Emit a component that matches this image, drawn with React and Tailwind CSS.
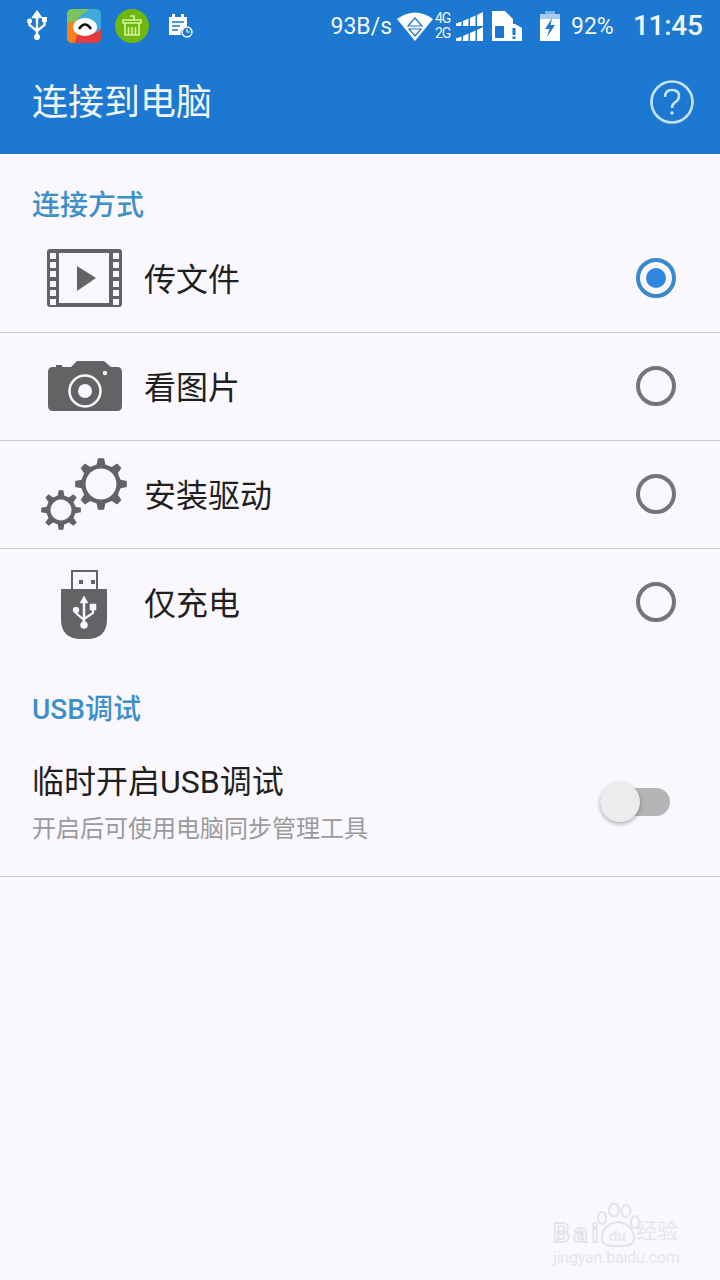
const gearPath = (cx, cy, outer, root, teeth) => {
  const pts = []
  const step = (Math.PI * 2) / teeth
  for (let i = 0; i < teeth; i++) {
    const a = i * step - Math.PI / 2
    const w = step * 0.15
    const v = step * 0.28
    pts.push([a - v, root], [a - w, outer], [a + w, outer], [a + v, root])
  }
  return (
    pts
      .map(([a, r], i) => `${i ? "L" : "M"}${(cx + Math.cos(a) * r).toFixed(2)} ${(cy + Math.sin(a) * r).toFixed(2)}`)
      .join(" ") + " Z"
  )
}

const FilmIcon = () => {
  const ys = [30, 39, 48, 58, 67, 76]
  return (
    <svg width="112" height="108" fill="#636265">
      <rect x="15" y="24" width="75" height="58" rx="3" />
      <rect x="27" y="28" width="50" height="50" fill="#faf8fc" />
      {ys.map((y) => (
        <g key={y} fill="#faf8fc">
          <rect x="18" y={y - 2} width="6" height="6" />
          <rect x="81" y={y - 2} width="6" height="6" />
        </g>
      ))}
      <path d="M45 41 L64 53 L45 66 Z" />
    </svg>
  )
}

const CameraIcon = () => (
  <svg width="112" height="108" fill="#636265">
    <path d="M21 34 H24 V32 H30 V34 H39 L45 28 H72 L79 34 H85 Q90 34 90 39 V73 Q90 78 85 78 H21 Q16 78 16 73 V39 Q16 34 21 34 Z" />
    <circle cx="53" cy="58" r="15.5" fill="none" stroke="#faf8fc" strokeWidth="2.5" />
    <circle cx="53" cy="58" r="7" fill="#faf8fc" />
    <circle cx="73" cy="40" r="2.2" fill="#faf8fc" />
  </svg>
)

const GearsIcon = () => (
  <svg width="112" height="108" fill="#636265">
    <path fillRule="evenodd" d={`${gearPath(69, 43, 26, 20, 8)} M69 27.5 a15.5 15.5 0 1 0 0.01 0 Z`} />
    <path fillRule="evenodd" d={`${gearPath(29, 69, 20, 14.8, 8)} M29 58.5 a10.5 10.5 0 1 0 0.01 0 Z`} />
  </svg>
)

const UsbStickIcon = () => (
  <svg width="112" height="108" fill="#636265">
    <rect x="40" y="22" width="25" height="19" fill="none" stroke="#636265" strokeWidth="2" />
    <rect x="47" y="31" width="4" height="4" />
    <rect x="59" y="31" width="4" height="4" />
    <path d="M29 40 H75 V70 Q75 90 55 90 H49 Q29 90 29 70 Z" />
    <g fill="#faf8fc" stroke="#faf8fc">
      <path d="M52 47 L56 54 H48 Z" strokeWidth="0.5" />
      <path d="M52 52 V76" strokeWidth="2.5" fill="none" />
      <path d="M44 62 V64 L52 71 M61 60 V64 L52 70" strokeWidth="2.2" fill="none" />
      <circle cx="52" cy="76" r="3.5" strokeWidth="0.5" />
      <circle cx="44" cy="61" r="3" strokeWidth="0.5" />
      <rect x="58" y="55" width="6" height="6" strokeWidth="0.5" />
    </g>
  </svg>
)

const SignalBars = () => (
  <svg width="28" height="14" viewBox="0 0 28 14" fill="#fff">
    <path d="M0 14 V11.5 L5.5 9.5 V14 Z M7 14 V9 L12.5 6.5 V14 Z M14 14 V6 L19.5 3.5 V14 Z M21 14 V3 L27 0 V14 Z" />
  </svg>
)

const StatusLeft = () => (
  <div className="flex items-center">
    <svg className="ml-[27px]" width="20" height="32" viewBox="0 0 20 32" fill="none" stroke="#fff" strokeWidth="2.4">
      <path d="M10 2 L13.5 7 H6.5 Z" fill="#fff" />
      <path d="M10 6 V26 M2.5 12 V15 L10 21 M17.5 11 V15 L10 21" />
      <circle cx="10" cy="27" r="3" fill="#fff" stroke="none" />
      <circle cx="2.5" cy="11" r="2.5" fill="#fff" stroke="none" />
      <rect x="15" y="7" width="5" height="5" fill="#fff" stroke="none" />
    </svg>
    <svg className="ml-[20px]" width="34" height="34" viewBox="0 0 34 34">
      <defs>
        <clipPath id="appclip">
          <rect width="34" height="34" rx="5" />
        </clipPath>
      </defs>
      <g clipPath="url(#appclip)">
        <rect width="34" height="34" fill="#3fa9e0" />
        <path d="M0 0 H24 Q14 4 8 14 L0 20 Z" fill="#7cc35b" />
        <path d="M0 14 L8 12 Q10 24 24 28 L14 34 H0 Z" fill="#f5821f" />
        <path d="M10 26 Q24 28 34 20 V34 H8 Z" fill="#e53b3a" />
        <ellipse cx="18" cy="18" rx="12" ry="9" fill="#fff" />
        <path d="M12 20 Q18 11 24 20" fill="none" stroke="#111" strokeWidth="2.6" />
      </g>
    </svg>
    <svg className="ml-[14px]" width="34" height="34" viewBox="0 0 34 34" fill="none" stroke="#d8f5a0" strokeWidth="1.6">
      <circle cx="17" cy="17" r="17" fill="#6fb80f" stroke="none" />
      <path d="M15 7 H19 V11 M8 11 H26 V14 H8 Z M10 14 V26 H24 V14 M13.5 18 V26 M17 18 V26 M20.5 18 V26" />
    </svg>
    <svg className="ml-[20px]" width="24" height="24" viewBox="0 0 24 24" fill="#fff">
      <path d="M0 3 H3 V0 H6 V3 H12 V0 H15 V3 H18 V13 A6 6 0 0 0 12 21 H0 Z" />
      <path d="M3 8 H15 M3 12 H11 M3 16 H9" stroke="#1c78d0" strokeWidth="1.5" />
      <circle cx="18" cy="18" r="5" fill="none" stroke="#fff" strokeWidth="1.4" />
      <path d="M18 15 V18 H21" fill="none" stroke="#fff" strokeWidth="1.2" />
    </svg>
  </div>
)

const StatusRight = () => (
  <div className="flex items-center text-[#f2f7fc]">
    <span className="text-[23px] leading-none">93B/s</span>
    <svg className="ml-[5px]" width="36" height="29" viewBox="0 0 36 29" fill="#fff">
      <path d="M0 7 Q18 -6 36 7 L18 29 Z" />
      <path d="M18 6 L25 14 H11 Z M12 17 H24 L18 24 Z" fill="none" stroke="#1c78d0" strokeWidth="1.2" />
    </svg>
    <div className="ml-[2px] flex w-[16px] flex-col text-[14px] font-normal leading-[15px] tracking-[-1px]">
      <span>4G</span>
      <span>2G</span>
    </div>
    <div className="ml-[5px] flex flex-col gap-[1px]">
      <SignalBars />
      <SignalBars />
    </div>
    <svg className="ml-[8px]" width="30" height="30" viewBox="0 0 30 30" fill="#fff">
      <path d="M0 0 H13 L21 8 V13 H15 V30 H0 Z" />
      <rect x="3" y="15" width="9" height="12" fill="#1c78d0" />
      <path d="M13 13 H23 L30 17 V30 H13 Z" />
      <path d="M20.5 17 H23.5 V24 H20.5 Z M20.5 25.5 H23.5 V28 H20.5 Z" fill="#1c78d0" />
    </svg>
    <svg className="ml-[18px]" width="20" height="30" viewBox="0 0 20 30" fill="#fff">
      <rect x="5" y="0" width="10" height="3" fill="#7fb2e4" />
      <rect x="0" y="3" width="20" height="6" fill="#a9cbed" />
      <rect x="0" y="8" width="20" height="22" />
      <path d="M12 7 L5 18 H9.5 L7 26 L15 14 H10.5 Z" fill="#1c78d0" />
    </svg>
    <span className="ml-[11px] w-[43px] text-[23px] leading-none">92%</span>
    <span className="ml-[19px] w-[71px] text-[28px] font-medium leading-none tracking-[-0.3px]">11:45</span>
  </div>
)

const options = [
  { label: "传文件", Icon: FilmIcon, selected: true },
  { label: "看图片", Icon: CameraIcon },
  { label: "安装驱动", Icon: GearsIcon },
  { label: "仅充电", Icon: UsbStickIcon, last: true },
]

const Radio = ({ selected }) =>
  selected ? (
    <div className="mb-[2px] flex h-10 w-10 items-center justify-center rounded-full border-4 border-[#3a88cd]">
      <div className="h-5 w-5 rounded-full bg-[#2f86de]" />
    </div>
  ) : (
    <div className="mb-[2px] h-10 w-10 rounded-full border-4 border-[#757577]" />
  )

const Watermark = () => (
  <div className="absolute left-[552px] top-[1200px] h-[72px] w-[140px] whitespace-nowrap text-[#e6e6ea]">
    <svg className="absolute left-[42px] top-[2px]" width="48" height="46" viewBox="0 0 48 46" fill="none" stroke="#e4e4e8" strokeWidth="2">
      <ellipse cx="8" cy="16" rx="4" ry="6" />
      <ellipse cx="20" cy="8" rx="5" ry="6.5" />
      <ellipse cx="32" cy="9" rx="4.5" ry="6" />
      <ellipse cx="41" cy="20" rx="4" ry="6" />
      <path d="M8 37 Q8 22 24 20 Q40 22 40 37 Q40 45 24 44 Q8 45 8 37 Z" />
    </svg>
    <span className="absolute left-[1px] top-[20px] text-[26px] font-bold leading-none tracking-[4px] text-transparent [-webkit-text-stroke:1.5px_#e2e2e6]">Bai</span>
    <span className="absolute left-[57px] top-[29px] text-[15px] font-bold leading-none">du</span>
    <span className="absolute left-[84px] top-[21px] text-[21px] leading-none">经验</span>
    <span className="absolute left-[1px] top-[50px] text-[16px] leading-none tracking-[-0.2px]">jingyan.baidu.com</span>
  </div>
)

export default function App() {
  return (
    <div className="relative flex h-[1280px] w-[720px] flex-col overflow-hidden bg-[#faf8fc] font-['Roboto','Noto_Sans_CJK_SC',sans-serif]">
      <header className="h-[154px] bg-[#1c78d0]">
        <div className="flex h-[52px] items-center justify-between pr-[16px]">
          <StatusLeft />
          <StatusRight />
        </div>
        <div className="flex h-[100px] items-center justify-between pl-[32px] pr-[26px]">
          <h1 className="mt-[2px] text-[36px] leading-none text-[#f0f6fc]">连接到电脑</h1>
          <svg width="44" height="44" viewBox="0 0 44 44" fill="none" stroke="#c5e4fa" strokeWidth="2.6">
            <circle cx="22" cy="22" r="20.5" />
            <path d="M15 17 Q15 10 22 10 Q29 10 29 16 Q29 20 25 22.5 Q22 24.5 22 28" />
            <circle cx="22" cy="33" r="1.8" fill="#c5e4fa" stroke="none" />
          </svg>
        </div>
      </header>

      <h2 className="flex h-[71px] items-end pl-[32px] text-[28px] font-medium leading-[38px] text-[#3d8fc9]">连接方式</h2>

      {options.map(({ label, Icon, selected, last }) => (
        <div
          key={label}
          className={`flex h-[108px] items-center pl-[32px] pr-[44px] ${last ? "" : "border-b border-[#c9c8cb]"}`}
        >
          <Icon />
          <span className="mt-[2px] flex-1 text-[32px] leading-none text-[#1f1f1f]">{label}</span>
          <Radio selected={selected} />
        </div>
      ))}

      <h2 className="mt-[33px] pl-[32px] text-[28px] font-medium leading-[40px] text-[#3d8fc9]">USB调试</h2>

      <div className="mt-[32px] flex h-[115px] items-start justify-between border-b border-[#c9c8cb] pl-[32px] pr-[50px]">
        <div className="flex flex-col">
          <span className="text-[32px] leading-[40px] text-[#1f1f1f]">临时开启USB调试</span>
          <span className="mt-[9px] text-[24px] leading-[36px] text-[#9a9a9c]">开启后可使用电脑同步管理工具</span>
        </div>
        <div className="relative mt-[26px] h-[28px] w-[70px] rounded-full bg-[#b5b4b6]">
          <div className="absolute -top-[6px] left-0 h-[40px] w-[40px] rounded-full bg-[#ececee] shadow-[0_2px_4px_rgba(0,0,0,0.3)]" />
        </div>
      </div>

      <Watermark />
    </div>
  )
}
